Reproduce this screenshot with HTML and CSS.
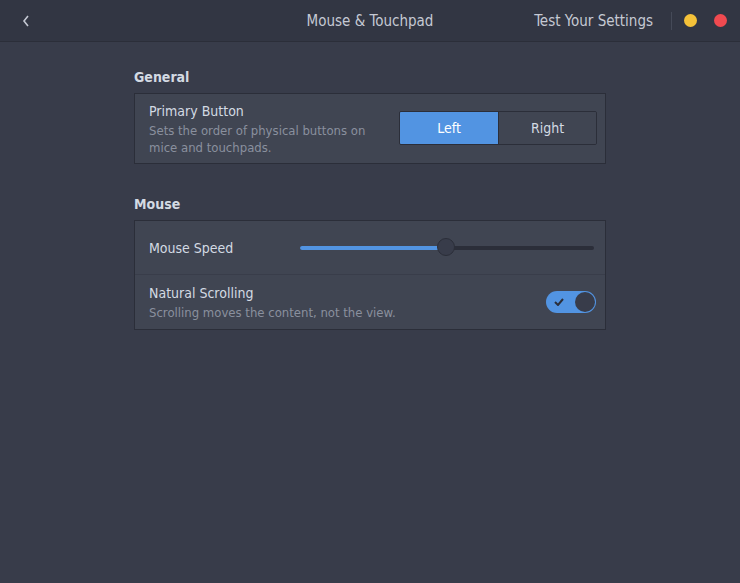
FILE: index.html
```html
<html>
<head>
<title>Mouse &amp; Touchpad</title>
<link rel="stylesheet" href="styles.css">
</head>
<body>

<div class="headerbar">
  <button class="back-button" title="Back">
    <svg width="10" height="14" viewBox="0 0 10 14"><path d="M7 2 L3 7 L7 12" fill="none" stroke="#c5c9d3" stroke-width="1.6"/></svg>
  </button>
  <div class="headerbar-title">Mouse &amp; Touchpad</div>
  <div class="headerbar-end">
    <span class="test-settings">Test Your Settings</span>
    <span class="headerbar-sep"></span>
    <span class="win-button win-min"></span>
    <span class="win-button win-close"></span>
  </div>
</div>

<div class="settings">
  <h2 class="section-title">General</h2>
  <div class="card">
    <div class="row row-primary">
      <div class="row-text">
        <div class="row-title">Primary Button</div>
        <div class="row-desc">Sets the order of physical buttons on<br>mice and touchpads.</div>
      </div>
      <div class="linked-buttons">
        <button class="linked-button active">Left</button>
        <button class="linked-button">Right</button>
      </div>
    </div>
  </div>

  <h2 class="section-title">Mouse</h2>
  <div class="card">
    <div class="row row-speed">
      <div class="row-title">Mouse Speed</div>
      <div class="slider">
        <div class="slider-fill" style="width: 50%"></div>
        <div class="slider-knob"></div>
      </div>
    </div>
    <div class="row row-scroll">
      <div class="row-text">
        <div class="row-title">Natural Scrolling</div>
        <div class="row-desc">Scrolling moves the content, not the view.</div>
      </div>
      <div class="switch on">
        <svg class="switch-check" width="10" height="8" viewBox="0 0 10 8"><path d="M1 4 L4 7 L9 1" fill="none" stroke="#2b2f3b" stroke-width="2"/></svg>
        <span class="switch-knob"></span>
      </div>
    </div>
  </div>
</div>

</body>
</html>
```

FILE: styles.css
```css
body {
  margin: 0;
  background: #383c4a;
  color: #d3dae3;
  font-family: "DejaVu Sans", sans-serif;
  font-stretch: condensed;
  font-size: 14px;
}

/* title bar */
.headerbar {
  display: flex;
  align-items: center;
  height: 41px;
  background: #323643;
  border-bottom: 1px solid #2b2e39;
  padding: 0 13px 0 15px;
  position: relative;
}

.back-button {
  background: none;
  border: 0;
  padding: 0;
  width: 22px;
  height: 22px;
  display: flex;
  align-items: center;
  justify-content: center;
}

.headerbar-title {
  position: absolute;
  left: 0;
  right: 0;
  text-align: center;
  font-size: 15px;
  color: #c5c9d3;
  pointer-events: none;
}

.headerbar-end {
  margin-left: auto;
  display: flex;
  align-items: center;
  gap: 17px;
}

.test-settings {
  font-size: 15px;
  color: #c5c9d3;
}

.headerbar-sep {
  width: 1px;
  height: 18px;
  background: #454a58;
  margin-left: 1px;
  margin-right: -5px;
}

.win-button {
  width: 13px;
  height: 13px;
  border-radius: 50%;
}

.win-min { background: #f5c239; }
.win-close { background: #f04a50; }

/* content */
.settings {
  width: 472px;
  margin: 0 auto;
  padding-top: 27px;
}

.section-title {
  font-size: 14px;
  font-weight: bold;
  color: #d3dae3;
  margin: 0 0 8px 0;
}

.card {
  background: #404552;
  border: 1px solid #2b2e39;
  margin-bottom: 32px;
}

.row {
  display: flex;
  align-items: center;
  padding: 0 8px 0 14px;
}

.row + .row {
  border-top: 1px solid #393d4a;
}

.row-text {
  flex: 1;
}

.row-title {
  color: #d3dae3;
  line-height: 18px;
}

.row-desc {
  color: #8a909e;
  font-size: 13px;
  line-height: 17px;
  margin-top: 2px;
}

.row-primary {
  height: 69px;
}

/* Left / Right */
.linked-buttons {
  display: flex;
  border: 1px solid #2b2e39;
  border-radius: 2px;
  overflow: hidden;
  margin-top: -1px;
}

.linked-button {
  width: 98px;
  height: 32px;
  border: 0;
  background: #404552;
  color: #d3dae3;
  font: inherit;
  font-size: 14px;
  font-stretch: condensed;
}

.linked-button + .linked-button {
  border-left: 1px solid #2b2e39;
}

.linked-button.active {
  background: #5294e2;
  color: #fff;
}

/* speed slider */
.row-speed {
  height: 53px;
}

.row-speed .row-title {
  width: 151px;
}

.slider {
  flex: 1;
  height: 4px;
  border-radius: 2px;
  background: #2b2e39;
  margin-right: 3px;
  position: relative;
}

.slider-fill {
  height: 4px;
  border-radius: 2px;
  background: #5294e2;
}

.slider-knob {
  position: absolute;
  left: 50%;
  top: -8px;
  width: 18px;
  height: 18px;
  margin-left: -10px;
  box-sizing: border-box;
  border-radius: 50%;
  background: #383c4a;
  border: 1px solid #2b2e39;
}

/* natural scrolling switch */
.row-scroll {
  height: 54px;
}

.switch {
  width: 50px;
  height: 22px;
  box-sizing: border-box;
  border-radius: 11px;
  background: #5294e2;
  display: flex;
  align-items: center;
  justify-content: space-between;
  padding: 0 1px 0 8px;
  margin-right: 1px;
}

.switch-knob {
  width: 20px;
  height: 20px;
  border-radius: 50%;
  background: #383c4a;
}
```
